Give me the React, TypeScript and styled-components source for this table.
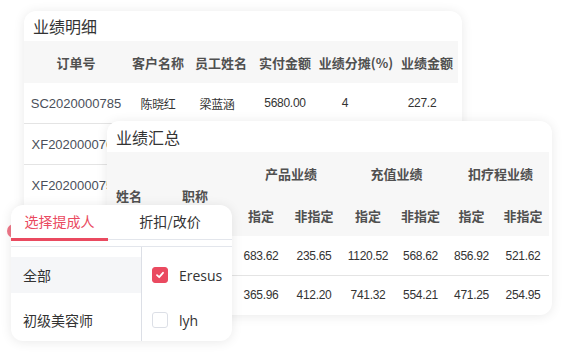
import React from "react";
import styled, { createGlobalStyle } from "styled-components";

const Global = createGlobalStyle`
  html, body { margin: 0; padding: 0; background: #fff; }
  body { font-family: "Noto Sans CJK SC", "Noto Sans", sans-serif; color: #333; }
  * { box-sizing: border-box; }
`;

const RED = "#ea4a60";
const CJK = `"Noto Sans CJK SC", "Noto Sans", sans-serif`;
const NUM = `"Liberation Sans", "Noto Sans CJK SC", sans-serif`;

const Canvas = styled.div`
  position: relative;
  width: 563px;
  height: 353px;
  overflow: hidden;
`;

const Card = styled.div<{ $x: number; $y: number; $w: number; $h: number; $z: number }>`
  position: absolute;
  left: ${(p) => p.$x}px;
  top: ${(p) => p.$y}px;
  width: ${(p) => p.$w}px;
  height: ${(p) => p.$h}px;
  z-index: ${(p) => p.$z};
  background: #fff;
  border-radius: 12px;
  box-shadow: 0 1px 12px rgba(0, 0, 0, 0.09);
  overflow: hidden;
  display: flex;
  flex-direction: column;
`;

const Title = styled.div<{ $h: number }>`
  height: ${(p) => p.$h}px;
  display: flex;
  align-items: center;
  padding-left: 9px;
  font-family: ${CJK};
  font-size: 16px;
  color: #333;
`;

/* ---------- 业绩明细 ---------- */
const detailCols = "104px 60px 66px 62px 80px 62px";

const DetailHead = styled.div`
  display: grid;
  grid-template-columns: ${detailCols};
  height: 42px;
  width: 434px;
  background: #f7f7f7;
  align-items: center;
`;

const HeadCell = styled.div`
  font-family: ${CJK};
  font-size: 13px;
  font-weight: 700;
  color: #505050;
  text-align: center;
  white-space: nowrap;
`;

const DetailRow = styled.div`
  display: grid;
  grid-template-columns: ${detailCols};
  height: 41px;
  width: 434px;
  align-items: center;
  border-bottom: 1px solid #e4e4e4;
`;

const Cell = styled.div<{ $shift?: number; $code?: boolean }>`
  font-family: ${(p) => (p.$code ? `"Liberation Sans", sans-serif` : NUM)};
  font-size: ${(p) => (p.$code ? 13 : 12)}px;
  letter-spacing: ${(p) => (p.$code ? "0" : "-0.3px")};
  color: ${(p) => (p.$code ? "#4a4f5a" : "#333")};
  text-align: center;
  white-space: nowrap;
  padding-right: ${(p) => (p.$shift ? p.$shift * 2 : 0)}px;
`;

/* ---------- 业绩汇总 ---------- */
const sumCols = "66px 62px 52px 54px 54px 51px 51px 52px";

const SumHead = styled.div`
  display: grid;
  grid-template-columns: ${sumCols};
  grid-template-rows: 42px 42px;
  width: 442px;
  background: #f7f7f7;
  align-items: center;
`;

const NameHead = styled(HeadCell)<{ $col: number }>`
  grid-column: ${(p) => p.$col};
  grid-row: 1 / span 2;
  text-align: left;
  padding-left: 9px;
  padding-top: 3px;
`;

const GroupHead = styled(HeadCell)<{ $col: number }>`
  grid-column: ${(p) => p.$col} / span 2;
  grid-row: 1;
  padding-left: 6px;
`;

const SubHead = styled(HeadCell)<{ $col: number }>`
  grid-column: ${(p) => p.$col};
  grid-row: 2;
`;

const SumRow = styled.div<{ $last?: boolean }>`
  display: grid;
  grid-template-columns: ${sumCols};
  height: 40px;
  width: 442px;
  align-items: center;
  border-bottom: ${(p) => (p.$last ? "none" : "1px solid #e4e4e4")};
`;

const NameCell = styled.div`
  font-family: ${CJK};
  font-size: 12px;
  color: #333;
  padding-left: 9px;
  white-space: nowrap;
`;

/* ---------- 选择提成人 ---------- */
const Peek = styled.div`
  position: absolute;
  left: 7px;
  top: 224px;
  width: 10px;
  height: 14px;
  border-radius: 7px 0 0 7px;
  background: ${RED};
  opacity: 0.75;
  z-index: 2;
`;

const Tabs = styled.div`
  display: flex;
  height: 35px;
  border-bottom: 1px solid #e3e6ec;
`;

const Tab = styled.div<{ $active?: boolean; $w: number }>`
  position: relative;
  width: ${(p) => p.$w}px;
  flex: none;
  display: flex;
  align-items: center;
  justify-content: center;
  padding-bottom: 2px;
  font-family: ${CJK};
  font-size: 14px;
  color: ${(p) => (p.$active ? RED : "#333")};
  &::after {
    content: "";
    display: ${(p) => (p.$active ? "block" : "none")};
    position: absolute;
    left: 0;
    right: 0;
    bottom: -2px;
    height: 3px;
    background: ${RED};
  }
`;

const Body = styled.div`
  flex: 1;
  margin-top: 6px;
  border-top: 1px solid #e3e6ec;
  display: flex;
`;

const Categories = styled.div`
  width: 131px;
  flex: none;
  border-right: 1px solid #dcdfe6;
  padding-top: 10px;
  display: flex;
  flex-direction: column;
  gap: 9px;
`;

const Category = styled.div<{ $active?: boolean }>`
  height: 36px;
  display: flex;
  align-items: center;
  padding-left: 12px;
  background: ${(p) => (p.$active ? "#f5f6f8" : "transparent")};
  font-family: ${CJK};
  font-size: 14px;
  color: #333;
`;

const People = styled.div`
  flex: 1;
  padding-top: 10px;
  padding-left: 10px;
  display: flex;
  flex-direction: column;
  gap: 9px;
`;

const Person = styled.label`
  height: 36px;
  display: flex;
  align-items: center;
  gap: 11px;
  font-family: "Open Sans", "Noto Sans", sans-serif;
  font-size: 14px;
  color: #333;
`;

const Box = styled.span<{ $checked?: boolean }>`
  width: 16px;
  height: 16px;
  border-radius: 3px;
  display: flex;
  align-items: center;
  justify-content: center;
  background: ${(p) => (p.$checked ? RED : "#fff")};
  border: 1px solid ${(p) => (p.$checked ? RED : "#dcdfe6")};
`;

/* rows 2 and 3 lie under the 业绩汇总 card; only their order numbers show */
const detailRows = [
  ["SC2020000785", "陈晓红", "梁蓝涵", "5680.00", "4", "227.2"],
  ["XF2020000763", "", "", "", "", ""],
  ["XF2020000758", "", "", "", "", ""],
];

/* the name / title cells lie under the 选择提成人 card */
const sumRows = [
  ["", "", "683.62", "235.65", "1120.52", "568.62", "856.92", "521.62"],
  ["", "", "365.96", "412.20", "741.32", "554.21", "471.25", "254.95"],
];

export default function App() {
  return (
    <Canvas>
      <Global />
      <Card $x={24} $y={11} $w={438} $h={205} $z={1}>
        <Title $h={30}>业绩明细</Title>
        <DetailHead>
          {["订单号", "客户名称", "员工姓名", "实付金额", "业绩分摊(%)", "业绩金额"].map((h) => (
            <HeadCell key={h}>{h}</HeadCell>
          ))}
        </DetailHead>
        {detailRows.map((r) => (
          <DetailRow key={r[0]}>
            <Cell $code>{r[0]}</Cell>
            <Cell>{r[1]}</Cell>
            <Cell $shift={4}>{r[2]}</Cell>
            <Cell>{r[3]}</Cell>
            <Cell $shift={11}>{r[4]}</Cell>
            <Cell $shift={5}>{r[5]}</Cell>
          </DetailRow>
        ))}
      </Card>

      <Card $x={107} $y={121} $w={445} $h={194} $z={2}>
        <Title $h={32}>业绩汇总</Title>
        <SumHead>
          <NameHead $col={1}>姓名</NameHead>
          <NameHead $col={2}>职称</NameHead>
          <GroupHead $col={3}>产品业绩</GroupHead>
          <GroupHead $col={5}>充值业绩</GroupHead>
          <GroupHead $col={7}>扣疗程业绩</GroupHead>
          {[3, 4, 5, 6, 7, 8].map((c) => (
            <SubHead key={c} $col={c}>
              {c % 2 === 1 ? "指定" : "非指定"}
            </SubHead>
          ))}
        </SumHead>
        {sumRows.map((r, i) => (
          <SumRow key={i} $last={i === sumRows.length - 1}>
            <NameCell>{r[0]}</NameCell>
            <NameCell>{r[1]}</NameCell>
            {r.slice(2).map((v, j) => (
              <Cell key={j}>{v}</Cell>
            ))}
          </SumRow>
        ))}
      </Card>

      <Peek />

      <Card $x={11} $y={205} $w={221} $h={136} $z={3}>
        <Tabs>
          <Tab $active $w={97}>选择提成人</Tab>
          <Tab $w={124}>折扣/改价</Tab>
        </Tabs>
        <Body>
          <Categories>
            <Category $active>全部</Category>
            <Category>初级美容师</Category>
          </Categories>
          <People>
            <Person>
              <Box $checked>
                <svg width="10" height="10" viewBox="0 0 10 10">
                  <path d="M2 5.2 L4.2 7.2 L8 2.8" fill="none" stroke="#fff" strokeWidth="1.8" strokeLinecap="round" strokeLinejoin="round" />
                </svg>
              </Box>
              Eresus
            </Person>
            <Person>
              <Box />
              lyh
            </Person>
          </People>
        </Body>
      </Card>
    </Canvas>
  );
}
